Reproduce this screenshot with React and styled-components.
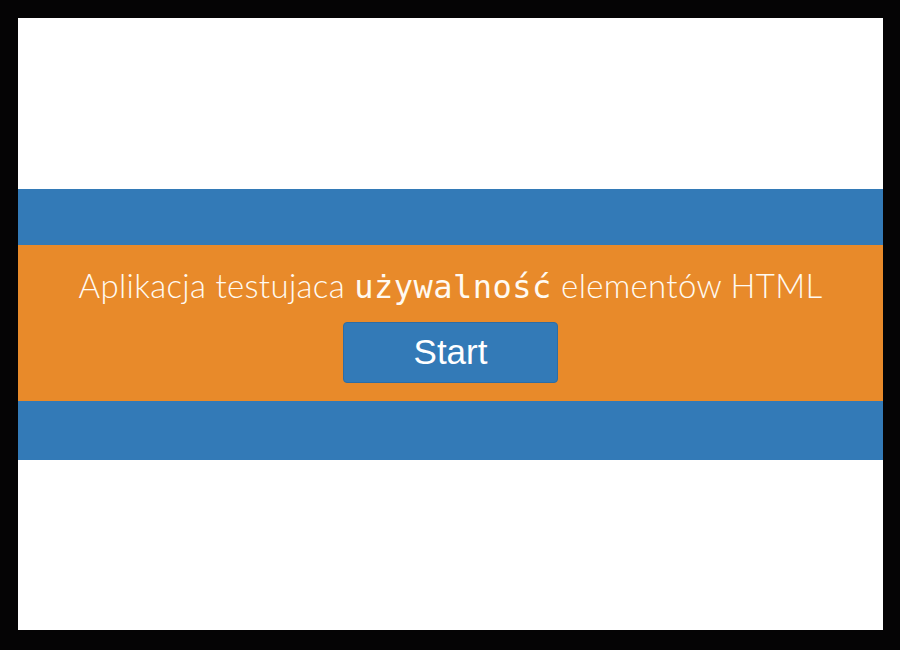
import React from "react";
import styled, { createGlobalStyle } from "styled-components";

const Global = createGlobalStyle`
  html, body { margin: 0; padding: 0; background: #000; }
  body { font-family: "Liberation Sans", Arial, sans-serif; }
`;

const Frame = styled.div`
  width: 900px;
  height: 650px;
  box-sizing: border-box;
  background: #050405;
  padding: 18px 17px 20px 18px;
`;

const Screen = styled.div`
  height: 100%;
  background: #ffffff;
  display: flex;
  flex-direction: column;
  justify-content: center;
`;

const BlueBand = styled.div`
  height: ${(p) => p.$h}px;
  background: #337ab7;
`;

const OrangeBand = styled.div`
  height: 156px;
  background: #e88a2a;
  display: flex;
  flex-direction: column;
  align-items: center;
  box-sizing: border-box;
  padding-top: 15px;
`;

const Title = styled.h1`
  margin: 0;
  font-family: Lato, "Noto Sans", sans-serif;
  font-weight: 300;
  font-size: 33px;
  line-height: 50px;
  letter-spacing: 0.3px;
  color: #fffaf2;
  white-space: nowrap;
`;

const Mono = styled.span`
  font-family: "DejaVu Sans Mono", "Liberation Mono", monospace;
  font-weight: 400;
  font-size: 32px;
  letter-spacing: 0.5px;
`;

const StartButton = styled.button`
  margin-top: 10px;
  width: 215px;
  height: 61px;
  border: 1px solid #2e6da4;
  border-radius: 4px;
  background: #337ab7;
  color: #fff;
  font-family: "Liberation Sans", Arial, sans-serif;
  font-size: 35px;
  padding: 0;
  cursor: pointer;
`;

export default function App() {
  return (
    <>
      <Global />
      <Frame>
        <Screen>
          <BlueBand $h={56} />
          <OrangeBand>
            <Title>
              Aplikacja testujaca <Mono>używalność</Mono> elementów HTML
            </Title>
            <StartButton>Start</StartButton>
          </OrangeBand>
          <BlueBand $h={59} />
        </Screen>
      </Frame>
    </>
  );
}
